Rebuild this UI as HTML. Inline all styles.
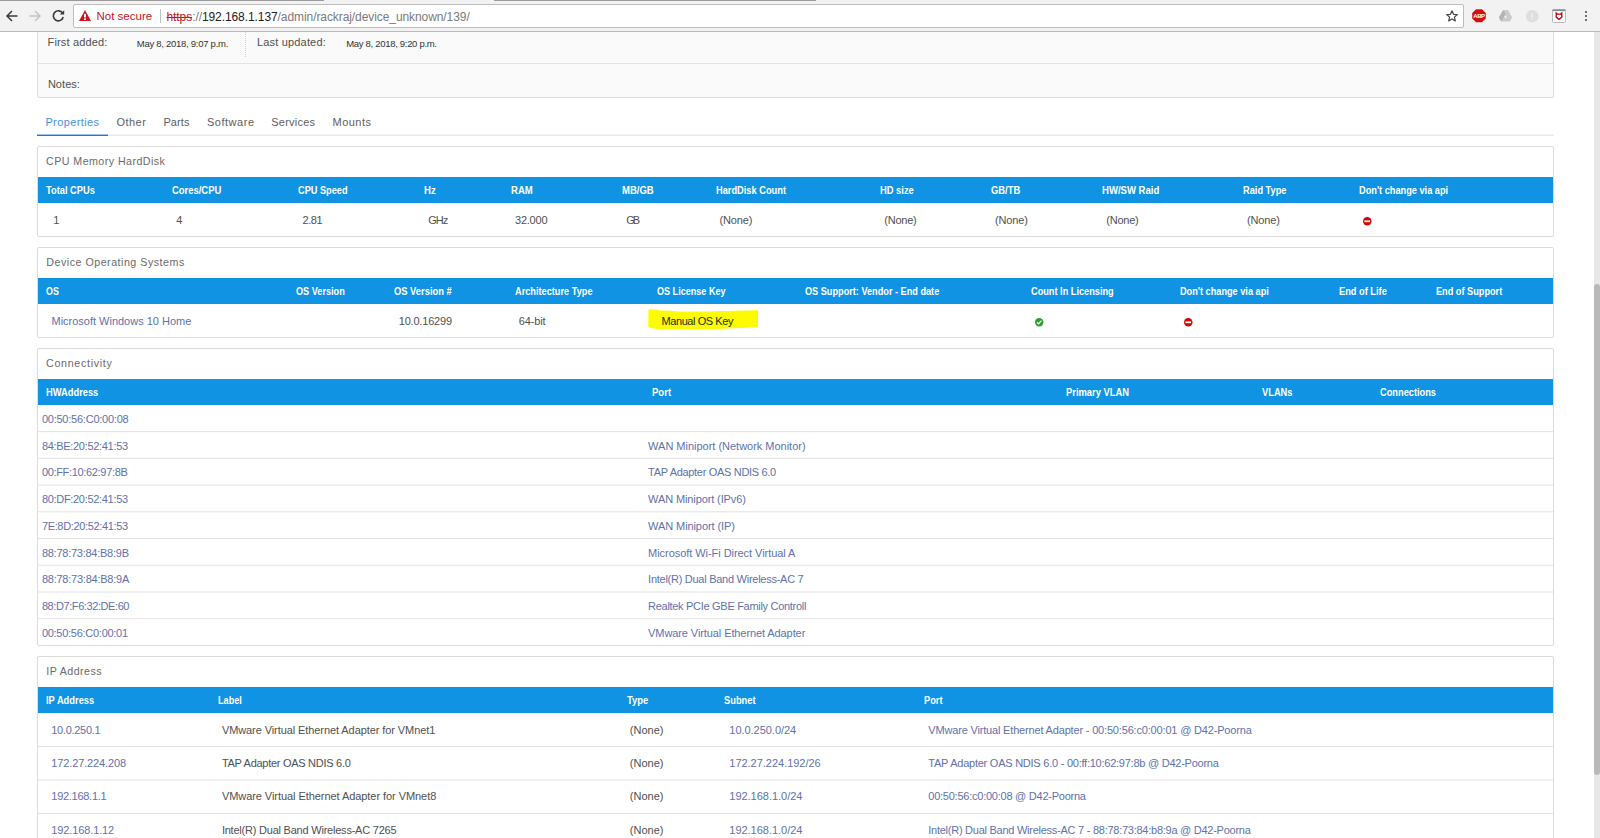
<!DOCTYPE html>
<html><head><meta charset="utf-8"><title>Device</title>
<style>
html,body{margin:0;padding:0;width:1600px;height:838px;overflow:hidden;background:#fff;}
body{position:relative;font-family:"Liberation Sans",sans-serif;}
.t{position:absolute;white-space:nowrap;line-height:normal;transform-origin:0 0;}
.r{position:absolute;box-sizing:content-box;}
svg.r{overflow:visible;}
</style></head><body>
<div class="r" style="left:1594px;top:32px;width:6px;height:806px;background:#e8e8e8;"></div>
<div class="r" style="left:1594px;top:284px;width:6px;height:491px;background:#b9b9b9;border-radius:3px"></div>
<div class="r" style="left:37px;top:20px;width:1515px;height:76px;background:#fafafa;border:1px solid #dcdcdc;border-radius:2px"></div>
<div class="r" style="left:38px;top:63px;width:1515px;height:1px;background:#e3e3e3;"></div>
<div class="r" style="left:245px;top:32px;width:0;height:25px;border-left:1px dotted #d0d0d0"></div>
<div class="t" style="left:47.60px;top:36.05px;font-size:11px;color:#505050;letter-spacing:0.148px;">First added:</div>
<div class="t" style="left:136.75px;top:38.40px;font-size:9.5px;color:#333;letter-spacing:-0.268px;">May 8, 2018, 9:07 p.m.</div>
<div class="t" style="left:257.00px;top:36.05px;font-size:11px;color:#505050;letter-spacing:0.173px;">Last updated:</div>
<div class="t" style="left:346.25px;top:38.40px;font-size:9.5px;color:#333;letter-spacing:-0.306px;">May 8, 2018, 9:20 p.m.</div>
<div class="t" style="left:47.90px;top:78.05px;font-size:11px;color:#505050;letter-spacing:0.04px;">Notes:</div>
<div class="r" style="left:107px;top:134px;width:1447px;height:1px;background:#f4f4f4;"></div>
<div class="r" style="left:107px;top:135px;width:1447px;height:1px;background:#e9e9e9;"></div>
<div class="r" style="left:37px;top:134px;width:71px;height:1px;background:#98c3ef;"></div>
<div class="r" style="left:37px;top:135px;width:71px;height:1px;background:#0a80dd;"></div>
<div class="t" style="left:45.40px;top:116.05px;font-size:11px;color:#4a90e2;letter-spacing:0.386px;">Properties</div>
<div class="t" style="left:116.60px;top:116.05px;font-size:11px;color:#606060;letter-spacing:0.425px;">Other</div>
<div class="t" style="left:163.40px;top:116.05px;font-size:11px;color:#606060;letter-spacing:0.081px;">Parts</div>
<div class="t" style="left:206.90px;top:116.05px;font-size:11px;color:#606060;letter-spacing:0.529px;">Software</div>
<div class="t" style="left:271.25px;top:116.05px;font-size:11px;color:#606060;letter-spacing:0.225px;">Services</div>
<div class="t" style="left:332.50px;top:116.05px;font-size:11px;color:#606060;letter-spacing:0.485px;">Mounts</div>
<div class="r" style="left:37px;top:146px;width:1515px;height:89px;background:#fff;border:1px solid #dcdcdc;border-radius:2px"></div>
<div class="t" style="left:46.10px;top:155.32px;font-size:10.7px;color:#6a6a6a;letter-spacing:0.428px;">CPU Memory HardDisk</div>
<div class="r" style="left:38px;top:177px;width:1515px;height:26px;background:#0f93e2;"></div>
<div class="t" style="left:46.10px;top:184.04px;font-size:11px;color:#fff;font-weight:bold;transform:scaleX(0.8453);">Total CPUs</div>
<div class="t" style="left:172.00px;top:184.04px;font-size:11px;color:#fff;font-weight:bold;transform:scaleX(0.8573);">Cores/CPU</div>
<div class="t" style="left:298.00px;top:184.04px;font-size:11px;color:#fff;font-weight:bold;transform:scaleX(0.8347);">CPU Speed</div>
<div class="t" style="left:424.25px;top:184.04px;font-size:11px;color:#fff;font-weight:bold;transform:scaleX(0.8736);">Hz</div>
<div class="t" style="left:510.75px;top:184.04px;font-size:11px;color:#fff;font-weight:bold;transform:scaleX(0.8683);">RAM</div>
<div class="t" style="left:622.00px;top:184.04px;font-size:11px;color:#fff;font-weight:bold;transform:scaleX(0.8657);">MB/GB</div>
<div class="t" style="left:715.50px;top:184.04px;font-size:11px;color:#fff;font-weight:bold;transform:scaleX(0.8421);">HardDisk Count</div>
<div class="t" style="left:880.00px;top:184.04px;font-size:11px;color:#fff;font-weight:bold;transform:scaleX(0.8496);">HD size</div>
<div class="t" style="left:990.75px;top:184.04px;font-size:11px;color:#fff;font-weight:bold;transform:scaleX(0.8546);">GB/TB</div>
<div class="t" style="left:1101.75px;top:184.04px;font-size:11px;color:#fff;font-weight:bold;transform:scaleX(0.8674);">HW/SW Raid</div>
<div class="t" style="left:1243.00px;top:184.04px;font-size:11px;color:#fff;font-weight:bold;transform:scaleX(0.8406);">Raid Type</div>
<div class="t" style="left:1358.90px;top:184.04px;font-size:11px;color:#fff;font-weight:bold;transform:scaleX(0.8364);">Don&#x27;t change via api</div>
<div class="t" style="left:53.30px;top:214.04px;font-size:11px;color:#505050;">1</div>
<div class="t" style="left:176.25px;top:214.04px;font-size:11px;color:#505050;">4</div>
<div class="t" style="left:302.50px;top:214.04px;font-size:11px;color:#505050;letter-spacing:-0.467px;">2.81</div>
<div class="t" style="left:428.25px;top:214.04px;font-size:11px;color:#505050;letter-spacing:-1.0px;">GHz</div>
<div class="t" style="left:515.00px;top:214.04px;font-size:11px;color:#505050;letter-spacing:-0.23px;">32.000</div>
<div class="t" style="left:626.25px;top:214.04px;font-size:11px;color:#505050;letter-spacing:-2.15px;">GB</div>
<div class="t" style="left:719.50px;top:214.04px;font-size:11px;color:#505050;letter-spacing:-0.125px;">(None)</div>
<div class="t" style="left:884.25px;top:214.04px;font-size:11px;color:#505050;letter-spacing:-0.225px;">(None)</div>
<div class="t" style="left:995.00px;top:214.04px;font-size:11px;color:#505050;letter-spacing:-0.125px;">(None)</div>
<div class="t" style="left:1106.25px;top:214.04px;font-size:11px;color:#505050;letter-spacing:-0.225px;">(None)</div>
<div class="t" style="left:1247.00px;top:214.04px;font-size:11px;color:#505050;letter-spacing:-0.125px;">(None)</div>
<svg class="r" style="left:1362.75px;top:216.75px" width="8.5" height="8.5" viewBox="0 0 8.5 8.5"><circle cx="4.25" cy="4.25" r="4.25" fill="#d90000"/><rect x="1.4" y="3.4" width="5.7" height="1.8" fill="#fff"/></svg>
<div class="r" style="left:37px;top:247px;width:1515px;height:89px;background:#fff;border:1px solid #dcdcdc;border-radius:2px"></div>
<div class="t" style="left:46.25px;top:256.32px;font-size:10.7px;color:#6a6a6a;letter-spacing:0.499px;">Device Operating Systems</div>
<div class="r" style="left:38px;top:278px;width:1515px;height:26px;background:#0f93e2;"></div>
<div class="t" style="left:46.10px;top:285.05px;font-size:11px;color:#fff;font-weight:bold;transform:scaleX(0.8113);">OS</div>
<div class="t" style="left:295.50px;top:285.05px;font-size:11px;color:#fff;font-weight:bold;transform:scaleX(0.8305);">OS Version</div>
<div class="t" style="left:394.25px;top:285.05px;font-size:11px;color:#fff;font-weight:bold;transform:scaleX(0.8508);">OS Version #</div>
<div class="t" style="left:514.50px;top:285.05px;font-size:11px;color:#fff;font-weight:bold;transform:scaleX(0.836);">Architecture Type</div>
<div class="t" style="left:657.00px;top:285.05px;font-size:11px;color:#fff;font-weight:bold;transform:scaleX(0.8238);">OS License Key</div>
<div class="t" style="left:804.50px;top:285.05px;font-size:11px;color:#fff;font-weight:bold;transform:scaleX(0.832);">OS Support: Vendor - End date</div>
<div class="t" style="left:1030.80px;top:285.05px;font-size:11px;color:#fff;font-weight:bold;transform:scaleX(0.8354);">Count In Licensing</div>
<div class="t" style="left:1179.60px;top:285.05px;font-size:11px;color:#fff;font-weight:bold;transform:scaleX(0.8336);">Don&#x27;t change via api</div>
<div class="t" style="left:1339.00px;top:285.05px;font-size:11px;color:#fff;font-weight:bold;transform:scaleX(0.8412);">End of Life</div>
<div class="t" style="left:1435.80px;top:285.05px;font-size:11px;color:#fff;font-weight:bold;transform:scaleX(0.8335);">End of Support</div>
<svg class="r" style="left:648px;top:309px" width="111" height="21" viewBox="0 0 111 21"><path d="M0.5 0.3L9 0.5 11 1.5 22 1.8 30 2.6 60 2.4 75 2 100 1.6 110 1.2 110 17.8 104 18.6 80 19.4 60 20.4 30 20.6 10 20 3 19.2 0.3 18z" fill="#fdfb00"/></svg>
<div class="t" style="left:51.50px;top:315.05px;font-size:11px;color:#6171ad;letter-spacing:-0.009px;">Microsoft Windows 10 Home</div>
<div class="t" style="left:398.75px;top:315.05px;font-size:11px;color:#505050;letter-spacing:-0.2px;">10.0.16299</div>
<div class="t" style="left:518.75px;top:315.05px;font-size:11px;color:#505050;letter-spacing:-0.155px;">64-bit</div>
<div class="t" style="left:661.50px;top:315.05px;font-size:11px;color:#2a2a2a;letter-spacing:-0.421px;">Manual OS Key</div>
<svg class="r" style="left:1034.8px;top:317.8px" width="8.4" height="8.4" viewBox="0 0 8.4 8.4"><circle cx="4.2" cy="4.2" r="4.2" fill="#2a9f2a"/><path d="M2 4.3L3.6 5.9 6.4 2.6" fill="none" stroke="#fff" stroke-width="1.3"/></svg>
<svg class="r" style="left:1183.75px;top:317.75px" width="8.5" height="8.5" viewBox="0 0 8.5 8.5"><circle cx="4.25" cy="4.25" r="4.25" fill="#d90000"/><rect x="1.4" y="3.4" width="5.7" height="1.8" fill="#fff"/></svg>
<div class="r" style="left:37px;top:348px;width:1515px;height:296px;background:#fff;border:1px solid #dcdcdc;border-radius:2px"></div>
<div class="t" style="left:46.00px;top:357.32px;font-size:10.7px;color:#6a6a6a;letter-spacing:0.693px;">Connectivity</div>
<div class="r" style="left:38px;top:379px;width:1515px;height:26px;background:#0f93e2;"></div>
<div class="t" style="left:46.30px;top:386.05px;font-size:11px;color:#fff;font-weight:bold;transform:scaleX(0.8473);">HWAddress</div>
<div class="t" style="left:651.90px;top:386.05px;font-size:11px;color:#fff;font-weight:bold;transform:scaleX(0.8682);">Port</div>
<div class="t" style="left:1065.75px;top:386.05px;font-size:11px;color:#fff;font-weight:bold;transform:scaleX(0.8516);">Primary VLAN</div>
<div class="t" style="left:1262.00px;top:386.05px;font-size:11px;color:#fff;font-weight:bold;transform:scaleX(0.846);">VLANs</div>
<div class="t" style="left:1379.50px;top:386.05px;font-size:11px;color:#fff;font-weight:bold;transform:scaleX(0.8408);">Connections</div>
<div class="t" style="left:41.90px;top:413.05px;font-size:11px;color:#6171ad;letter-spacing:-0.233px;">00:50:56:C0:00:08</div>
<svg class="r" style="left:38px;top:0px" width="1515" height="838"><rect x="0" y="431.10" width="1515" height="1" fill="#e3e3e3"/></svg>
<div class="t" style="left:41.90px;top:440.05px;font-size:11px;color:#6171ad;letter-spacing:-0.308px;">84:BE:20:52:41:53</div>
<div class="t" style="left:648.10px;top:440.05px;font-size:11px;color:#6171ad;letter-spacing:-0.014px;">WAN Miniport (Network Monitor)</div>
<svg class="r" style="left:38px;top:0px" width="1515" height="838"><rect x="0" y="457.83" width="1515" height="1" fill="#e3e3e3"/></svg>
<div class="t" style="left:41.90px;top:466.05px;font-size:11px;color:#6171ad;letter-spacing:-0.327px;">00:FF:10:62:97:8B</div>
<div class="t" style="left:648.10px;top:466.05px;font-size:11px;color:#6171ad;letter-spacing:-0.314px;">TAP Adapter OAS NDIS 6.0</div>
<svg class="r" style="left:38px;top:0px" width="1515" height="838"><rect x="0" y="484.56" width="1515" height="1" fill="#e3e3e3"/></svg>
<div class="t" style="left:41.90px;top:493.05px;font-size:11px;color:#6171ad;letter-spacing:-0.308px;">80:DF:20:52:41:53</div>
<div class="t" style="left:648.10px;top:493.05px;font-size:11px;color:#6171ad;letter-spacing:-0.113px;">WAN Miniport (IPv6)</div>
<svg class="r" style="left:38px;top:0px" width="1515" height="838"><rect x="0" y="511.29" width="1515" height="1" fill="#e3e3e3"/></svg>
<div class="t" style="left:41.90px;top:520.04px;font-size:11px;color:#6171ad;letter-spacing:-0.347px;">7E:8D:20:52:41:53</div>
<div class="t" style="left:648.10px;top:520.04px;font-size:11px;color:#6171ad;letter-spacing:-0.088px;">WAN Miniport (IP)</div>
<svg class="r" style="left:38px;top:0px" width="1515" height="838"><rect x="0" y="538.02" width="1515" height="1" fill="#e3e3e3"/></svg>
<div class="t" style="left:41.90px;top:547.04px;font-size:11px;color:#6171ad;letter-spacing:-0.252px;">88:78:73:84:B8:9B</div>
<div class="t" style="left:648.10px;top:547.04px;font-size:11px;color:#6171ad;letter-spacing:-0.052px;">Microsoft Wi-Fi Direct Virtual A</div>
<svg class="r" style="left:38px;top:0px" width="1515" height="838"><rect x="0" y="564.75" width="1515" height="1" fill="#e3e3e3"/></svg>
<div class="t" style="left:41.90px;top:573.04px;font-size:11px;color:#6171ad;letter-spacing:-0.233px;">88:78:73:84:B8:9A</div>
<div class="t" style="left:648.10px;top:573.04px;font-size:11px;color:#6171ad;letter-spacing:-0.264px;">Intel(R) Dual Band Wireless-AC 7</div>
<svg class="r" style="left:38px;top:0px" width="1515" height="838"><rect x="0" y="591.48" width="1515" height="1" fill="#e3e3e3"/></svg>
<div class="t" style="left:41.90px;top:600.04px;font-size:11px;color:#6171ad;letter-spacing:-0.411px;">88:D7:F6:32:DE:60</div>
<div class="t" style="left:648.10px;top:600.04px;font-size:11px;color:#6171ad;letter-spacing:-0.297px;">Realtek PCIe GBE Family Controll</div>
<svg class="r" style="left:38px;top:0px" width="1515" height="838"><rect x="0" y="618.21" width="1515" height="1" fill="#e3e3e3"/></svg>
<div class="t" style="left:41.90px;top:627.04px;font-size:11px;color:#6171ad;letter-spacing:-0.27px;">00:50:56:C0:00:01</div>
<div class="t" style="left:648.10px;top:627.04px;font-size:11px;color:#6171ad;letter-spacing:-0.093px;">VMware Virtual Ethernet Adapter</div>
<div class="r" style="left:37px;top:656px;width:1515px;height:198px;background:#fff;border:1px solid #dcdcdc;border-radius:2px"></div>
<div class="t" style="left:46.25px;top:665.32px;font-size:10.7px;color:#6a6a6a;letter-spacing:0.422px;">IP Address</div>
<div class="r" style="left:38px;top:687px;width:1515px;height:26px;background:#0f93e2;"></div>
<div class="t" style="left:46.30px;top:694.04px;font-size:11px;color:#fff;font-weight:bold;transform:scaleX(0.8478);">IP Address</div>
<div class="t" style="left:218.10px;top:694.04px;font-size:11px;color:#fff;font-weight:bold;transform:scaleX(0.8285);">Label</div>
<div class="t" style="left:626.50px;top:694.04px;font-size:11px;color:#fff;font-weight:bold;transform:scaleX(0.8531);">Type</div>
<div class="t" style="left:724.40px;top:694.04px;font-size:11px;color:#fff;font-weight:bold;transform:scaleX(0.8478);">Subnet</div>
<div class="t" style="left:924.00px;top:694.04px;font-size:11px;color:#fff;font-weight:bold;transform:scaleX(0.84);">Port</div>
<div class="t" style="left:51.30px;top:724.04px;font-size:11px;color:#6171ad;letter-spacing:-0.3px;">10.0.250.1</div>
<div class="t" style="left:221.90px;top:724.04px;font-size:11px;color:#505050;letter-spacing:-0.084px;">VMware Virtual Ethernet Adapter for VMnet1</div>
<div class="t" style="left:629.80px;top:724.04px;font-size:11px;color:#505050;">(None)</div>
<div class="t" style="left:729.30px;top:724.04px;font-size:11px;color:#6171ad;letter-spacing:-0.031px;">10.0.250.0/24</div>
<div class="t" style="left:928.30px;top:724.04px;font-size:11px;color:#6171ad;letter-spacing:-0.174px;">VMware Virtual Ethernet Adapter - 00:50:56:c0:00:01 @ D42-Poorna</div>
<svg class="r" style="left:38px;top:0px" width="1515" height="838"><rect x="0" y="746.00" width="1515" height="1" fill="#e3e3e3"/></svg>
<div class="t" style="left:51.30px;top:757.04px;font-size:11px;color:#6171ad;letter-spacing:-0.135px;">172.27.224.208</div>
<div class="t" style="left:221.90px;top:757.04px;font-size:11px;color:#505050;letter-spacing:-0.279px;">TAP Adapter OAS NDIS 6.0</div>
<div class="t" style="left:629.80px;top:757.04px;font-size:11px;color:#505050;">(None)</div>
<div class="t" style="left:729.30px;top:757.04px;font-size:11px;color:#6171ad;letter-spacing:-0.022px;">172.27.224.192/26</div>
<div class="t" style="left:928.30px;top:757.04px;font-size:11px;color:#6171ad;letter-spacing:-0.241px;">TAP Adapter OAS NDIS 6.0 - 00:ff:10:62:97:8b @ D42-Poorna</div>
<svg class="r" style="left:38px;top:0px" width="1515" height="838"><rect x="0" y="779.50" width="1515" height="1" fill="#e3e3e3"/></svg>
<div class="t" style="left:51.30px;top:790.04px;font-size:11px;color:#6171ad;letter-spacing:-0.28px;">192.168.1.1</div>
<div class="t" style="left:221.90px;top:790.04px;font-size:11px;color:#505050;letter-spacing:-0.06px;">VMware Virtual Ethernet Adapter for VMnet8</div>
<div class="t" style="left:629.80px;top:790.04px;font-size:11px;color:#505050;">(None)</div>
<div class="t" style="left:729.30px;top:790.04px;font-size:11px;color:#6171ad;letter-spacing:-0.023px;">192.168.1.0/24</div>
<div class="t" style="left:928.30px;top:790.04px;font-size:11px;color:#6171ad;letter-spacing:-0.241px;">00:50:56:c0:00:08 @ D42-Poorna</div>
<svg class="r" style="left:38px;top:0px" width="1515" height="838"><rect x="0" y="813.00" width="1515" height="1" fill="#e3e3e3"/></svg>
<div class="t" style="left:51.30px;top:824.04px;font-size:11px;color:#6171ad;letter-spacing:-0.12px;">192.168.1.12</div>
<div class="t" style="left:221.90px;top:824.04px;font-size:11px;color:#505050;letter-spacing:-0.22px;">Intel(R) Dual Band Wireless-AC 7265</div>
<div class="t" style="left:629.80px;top:824.04px;font-size:11px;color:#505050;">(None)</div>
<div class="t" style="left:729.30px;top:824.04px;font-size:11px;color:#6171ad;letter-spacing:-0.023px;">192.168.1.0/24</div>
<div class="t" style="left:928.30px;top:824.04px;font-size:11px;color:#6171ad;letter-spacing:-0.256px;">Intel(R) Dual Band Wireless-AC 7 - 88:78:73:84:b8:9a @ D42-Poorna</div>
<div class="r" style="left:0px;top:0px;width:1600px;height:31px;background:#f2f2f2;"></div>
<div class="r" style="left:0px;top:0px;width:324px;height:1px;background:#9a9a9a;"></div>
<div class="r" style="left:494px;top:0px;width:322px;height:1px;background:#9a9a9a;"></div>
<div class="r" style="left:0px;top:31px;width:1600px;height:1px;background:#b9b9b9;"></div>
<div class="r" style="left:73px;top:4px;width:1389px;height:22px;background:#fff;border:1px solid #bdbdbd;border-radius:2px;"></div>
<svg class="r" style="left:5px;top:9px" width="14" height="14" viewBox="0 0 14 14"><path d="M12.5 7H2.5M7 2L2 7l5 5" fill="none" stroke="#3a3a3a" stroke-width="1.45"/></svg>
<svg class="r" style="left:28px;top:9px" width="14" height="14" viewBox="0 0 14 14"><path d="M1.5 7H11.5M7 2l5 5-5 5" fill="none" stroke="#c4c4c4" stroke-width="1.45"/></svg>
<svg class="r" style="left:52px;top:9px" width="13" height="13" viewBox="0 0 13 13"><path d="M10.6 4.2A5 5 0 1 0 11.2 8" fill="none" stroke="#3a3a3a" stroke-width="1.6"/><path d="M12.2 1.2V5.6H7.8z" fill="#3a3a3a"/></svg>
<svg class="r" style="left:79px;top:10px" width="12" height="11" viewBox="0 0 12 11"><path d="M6 0L12 11H0z" fill="#c8161d"/><rect x="5.05" y="3.8" width="1.9" height="3.7" rx="0.5" fill="#fff"/><rect x="5.05" y="8.3" width="1.9" height="1.6" rx="0.5" fill="#fff"/></svg>
<div class="t" style="left:96.50px;top:10.09px;font-size:11.5px;color:#c8161d;">Not secure</div>
<div class="r" style="left:160px;top:9px;width:1px;height:14px;background:#c0c0c0;"></div>
<div class="t" style="left:166.5px;top:10.14px;font-size:12px;color:#7a7a7a;letter-spacing:-0.08px"><span style="color:#c8161d;text-decoration:line-through">https</span>://<span style="color:#222">192.168.1.137</span>/admin/rackraj/device_unknown/139/</div>
<svg class="r" style="left:1446px;top:10px" width="12" height="12" viewBox="0 0 12 12"><path d="M6 0.8L7.5 4.3 11.3 4.6 8.4 7.1 9.3 10.9 6 8.9 2.7 10.9 3.6 7.1 0.7 4.6 4.5 4.3z" fill="none" stroke="#444" stroke-width="1.2" stroke-linejoin="round"/></svg>
<svg class="r" style="left:1472px;top:9px" width="14" height="14" viewBox="0 0 14 14"><path d="M4.1 0.2H9.9L13.8 4.1V9.4L9.9 13.3H4.1L0.2 9.4V4.1z" fill="#d40f0f"/><text x="7" y="9.2" font-family="Liberation Sans" font-weight="bold" font-size="6" fill="#fff" text-anchor="middle" letter-spacing="-0.45">ABP</text></svg>
<svg class="r" style="left:1499px;top:10px" width="14" height="12" viewBox="0 0 14 12"><path d="M4.2 0H8.9L13.2 7.5 10.8 11.5H2.2L0 7.5z" fill="#cbcbcb"/><path d="M4.2 0L6.6 4.1 2.2 11.5 0 7.5z" fill="#b3b3b3"/><path d="M6.5 5.1L8 7.7H5z" fill="#f2f2f2"/></svg>
<svg class="r" style="left:1526px;top:9.5px" width="12.5" height="12.5" viewBox="0 0 12 12"><circle cx="6" cy="6" r="6" fill="#dedede"/><rect x="5.4" y="3" width="1.2" height="4.2" fill="#f4f4f4"/><rect x="5.4" y="8" width="1.2" height="1.1" fill="#f4f4f4"/></svg>
<svg class="r" style="left:1552px;top:9px" width="14" height="14" viewBox="0 0 14 14"><rect x="0.5" y="0.5" width="13" height="13" rx="1" fill="#fff" stroke="#b8bcc0"/><rect x="0.5" y="0.5" width="13" height="1.6" fill="#76909c"/><path d="M4.2 4L5.3 5H8.7L9.8 4V8.1L7 10.4 4.2 8.1z" fill="none" stroke="#c00000" stroke-width="1.25"/></svg>
<div class="r" style="left:1585px;top:10.9px;width:2.3px;height:2.3px;border-radius:50%;background:#444"></div>
<div class="r" style="left:1585px;top:14.9px;width:2.3px;height:2.3px;border-radius:50%;background:#444"></div>
<div class="r" style="left:1585px;top:19.099999999999998px;width:2.3px;height:2.3px;border-radius:50%;background:#444"></div>
</body></html>
